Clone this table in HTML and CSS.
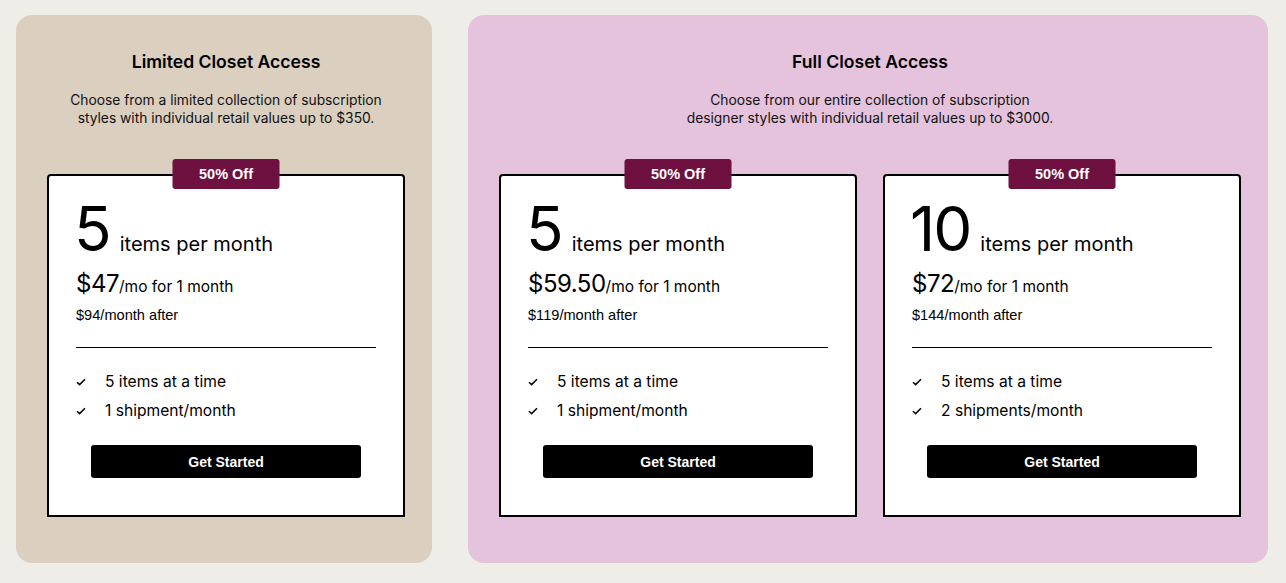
FILE: index.html
```html
<!DOCTYPE html>
<html lang="en">
<head>
    <meta charset="UTF-8">
    <meta name="viewport" content="width=device-width, initial-scale=1.0">
    <title>Closet Plans</title>
    <link rel="stylesheet" href="styles.css">
</head>
<body>
    <div class="plans">
        <section class="panel panel-limited">
            <h2 class="panel-title">Limited Closet Access</h2>
            <p class="panel-desc">Choose from a limited collection of subscription<br>styles with individual retail values up to $350.</p>
            <div class="cards">
                <div class="card">
                    <span class="badge">50% Off</span>
                    <div class="count"><span class="count-num">5</span><span class="count-label">items per month</span></div>
                    <div class="price"><span class="price-num">$47</span>/mo for 1 month</div>
                    <div class="after">$94/month after</div>
                    <hr class="divider">
                    <ul class="features">
                        <li><svg class="check" width="10" height="8" viewBox="0 0 10 8"><polyline points="1,4.2 3.6,6.6 9,1.2" /></svg>5 items at a time</li>
                        <li><svg class="check" width="10" height="8" viewBox="0 0 10 8"><polyline points="1,4.2 3.6,6.6 9,1.2" /></svg>1 shipment/month</li>
                    </ul>
                    <button class="start-btn">Get Started</button>
                </div>
            </div>
        </section>
        <section class="panel panel-full">
            <h2 class="panel-title">Full Closet Access</h2>
            <p class="panel-desc">Choose from our entire collection of subscription<br>designer styles with individual retail values up to $3000.</p>
            <div class="cards">
                <div class="card">
                    <span class="badge">50% Off</span>
                    <div class="count"><span class="count-num">5</span><span class="count-label">items per month</span></div>
                    <div class="price"><span class="price-num">$59.50</span>/mo for 1 month</div>
                    <div class="after">$119/month after</div>
                    <hr class="divider">
                    <ul class="features">
                        <li><svg class="check" width="10" height="8" viewBox="0 0 10 8"><polyline points="1,4.2 3.6,6.6 9,1.2" /></svg>5 items at a time</li>
                        <li><svg class="check" width="10" height="8" viewBox="0 0 10 8"><polyline points="1,4.2 3.6,6.6 9,1.2" /></svg>1 shipment/month</li>
                    </ul>
                    <button class="start-btn">Get Started</button>
                </div>
                <div class="card">
                    <span class="badge">50% Off</span>
                    <div class="count"><span class="count-num">10</span><span class="count-label">items per month</span></div>
                    <div class="price"><span class="price-num">$72</span>/mo for 1 month</div>
                    <div class="after">$144/month after</div>
                    <hr class="divider">
                    <ul class="features">
                        <li><svg class="check" width="10" height="8" viewBox="0 0 10 8"><polyline points="1,4.2 3.6,6.6 9,1.2" /></svg>5 items at a time</li>
                        <li><svg class="check" width="10" height="8" viewBox="0 0 10 8"><polyline points="1,4.2 3.6,6.6 9,1.2" /></svg>2 shipments/month</li>
                    </ul>
                    <button class="start-btn">Get Started</button>
                </div>
            </div>
        </section>
    </div>
</body>
</html>
```

FILE: styles.css
```css
body {
    font-family: Inter, 'Noto Sans', sans-serif;
    background-color: #efede8;
    color: #000000;
    margin: 0;
    padding: 0;
}
.plans {
    display: flex;
    gap: 36px;
    padding: 15px 0 0 16px;
}
.panel {
    box-sizing: border-box;
    padding: 35px 27px 46px 31px;
    border-radius: 16px;
    text-align: center;
}
.panel-limited {
    width: 416px;
    background-color: #dbcfc0;
}
.panel-full {
    width: 800px;
    background-color: #e5c3dc;
}
.panel-title {
    margin: 0;
    font-size: 17.6px;
    line-height: 24px;
    font-weight: 600;
}
.panel-desc {
    margin: 17px 0 0;
    font-size: 13.8px;
    line-height: 18px;
    color: #111111;
}
.cards {
    display: flex;
    gap: 26px;
    margin-top: 47px;
}
.card {
    position: relative;
    box-sizing: border-box;
    width: 358px;
    padding: 22px 27px 37px;
    background-color: #ffffff;
    border: 2px solid #000000;
    border-radius: 4px 4px 0 0;
    text-align: left;
}
.badge {
    position: absolute;
    top: -17px;
    left: 50%;
    transform: translateX(-50%);
    width: 107px;
    height: 30px;
    line-height: 30px;
    border-radius: 3px;
    background-color: #6e1040;
    color: #ffffff;
    font-family: 'Liberation Sans', Arial, sans-serif;
    font-size: 14.5px;
    font-weight: 700;
    text-align: center;
}
.count {
    display: flex;
    align-items: baseline;
    margin-left: -2px;
}
.count-num {
    font-size: 62px;
    line-height: 62px;
    font-weight: 400;
    letter-spacing: -2px;
}
.count-label {
    margin-left: 10px;
    font-size: 20px;
}
.price {
    margin-top: 9px;
    font-size: 15.5px;
    line-height: 30px;
}
.price-num {
    font-size: 24px;
    letter-spacing: -0.5px;
}
.after {
    margin-top: 4px;
    font-family: 'Liberation Sans', Arial, sans-serif;
    font-size: 14.6px;
    line-height: 18px;
}
.divider {
    margin: 23px 0 0;
    border: none;
    border-top: 1px solid #000000;
}
.features {
    list-style: none;
    margin: 19px 0 0;
    padding: 0;
}
.features li {
    display: flex;
    align-items: center;
    font-size: 15.6px;
    line-height: 29px;
}
.check {
    width: 10px;
    margin: 0 19px 0 0;
    fill: none;
    stroke: #000000;
    stroke-width: 1.5;
}
.start-btn {
    display: block;
    width: 270px;
    height: 33px;
    margin: 20px auto 0;
    border: none;
    border-radius: 3px;
    background-color: #000000;
    color: #ffffff;
    font-family: 'Liberation Sans', Arial, sans-serif;
    font-size: 14px;
    font-weight: 700;
    cursor: pointer;
}
```
